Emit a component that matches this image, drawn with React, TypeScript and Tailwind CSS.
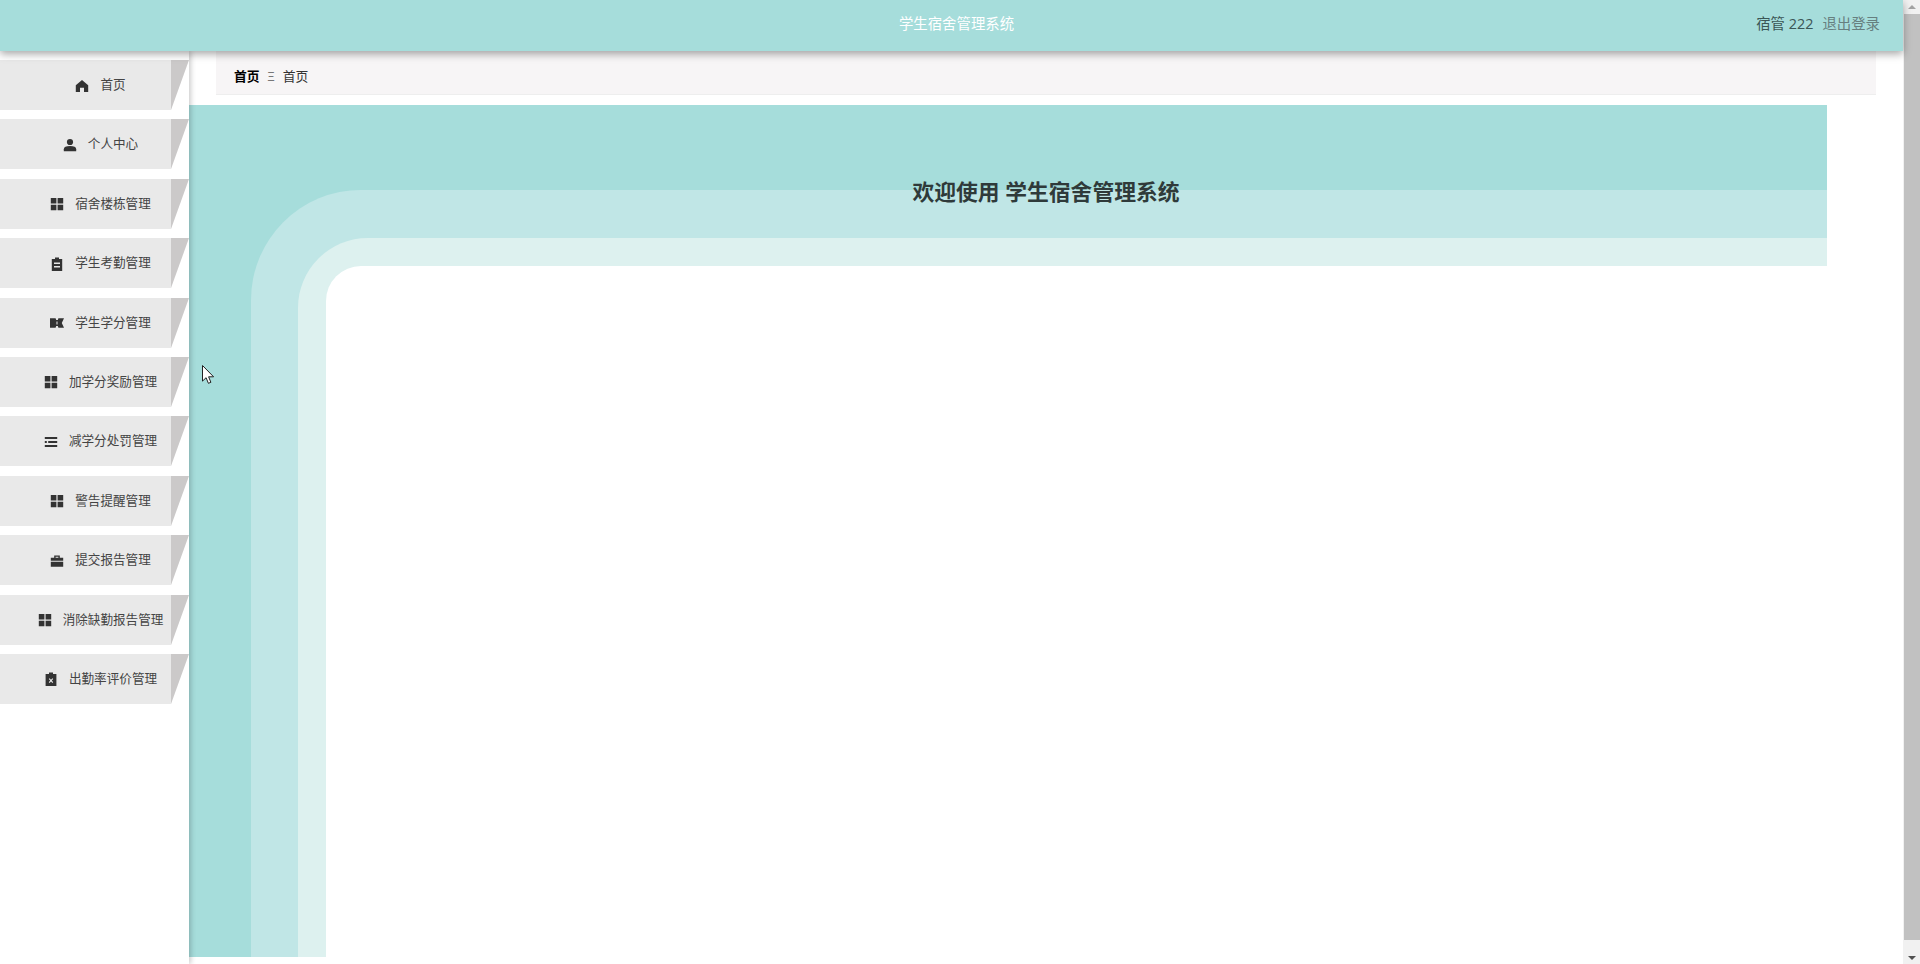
import type { ReactNode } from "react";

const Svg = ({ children }: { children: ReactNode }) => (
  <svg viewBox="0 0 14 14" className="w-[14px] h-[14px] shrink-0 text-[#333]" fill="currentColor">
    {children}
  </svg>
);

const HomeIcon = () => (
  <Svg>
    <path d="M7 1 13.2 6.2V13H9V8.8H5V13H.8V6.2Z" />
  </Svg>
);
const UserIcon = () => (
  <Svg>
    <circle cx="7" cy="4" r="3.1" />
    <path d="M.8 13.2v-2C.8 9 3 8 7 8s6.2 1 6.2 3.2v2Z" />
  </Svg>
);
const GridIcon = () => (
  <Svg>
    <path d="M.8 1h5.6v5.5H.8ZM7.6 1h5.6v5.5H7.6ZM.8 7.7h5.6v5.5H.8ZM7.6 7.7h5.6v5.5H7.6Z" />
  </Svg>
);
const ClipboardIcon = () => (
  <Svg>
    <path
      fillRule="evenodd"
      d="M5 .6h4V2h3.2v12H1.8V2H5ZM4 5.4v1.5h6V5.4ZM4 9v1.5h6V9Z"
    />
  </Svg>
);
const TicketIcon = () => (
  <Svg>
    <path
      fillRule="evenodd"
      d="M0 2.2h5.6L6.2 4h1.6l.6-1.8H14L11.8 7 14 11.8H8.4L7.8 10H6.2l-.6 1.8H0ZM6.5 5.4v3.2h1V5.4Z"
    />
  </Svg>
);
const ListIcon = () => (
  <Svg>
    <path d="M.8 2h12.4v1.9H.8ZM.8 6h2v1.9h-2ZM4.2 6h9v1.9h-9ZM.8 10h12.4v1.9H.8Z" />
  </Svg>
);
const CaseIcon = () => (
  <Svg>
    <path
      fillRule="evenodd"
      d="M4.2 3.8V1.4h5.6v2.4h3.4v3H.8v-3ZM5.6 2.7v1.1h2.8V2.7ZM.8 7.8h12.4v5H.8Z"
    />
  </Svg>
);
const ClipboardXIcon = () => (
  <Svg>
    <path
      fillRule="evenodd"
      d="M5 .4h4V2h3.4v12H1.6V2H5ZM5.6 6.2 4.8 7 6.2 8.6 4.8 10.2l.8.8L7 9.4 8.4 11l.8-.8-1.4-1.6L9.2 7l-.8-.8L7 7.8Z"
    />
  </Svg>
);

const menu = [
  { label: "首页", icon: <HomeIcon /> },
  { label: "个人中心", icon: <UserIcon /> },
  { label: "宿舍楼栋管理", icon: <GridIcon /> },
  { label: "学生考勤管理", icon: <ClipboardIcon /> },
  { label: "学生学分管理", icon: <TicketIcon /> },
  { label: "加学分奖励管理", icon: <GridIcon /> },
  { label: "减学分处罚管理", icon: <ListIcon /> },
  { label: "警告提醒管理", icon: <GridIcon /> },
  { label: "提交报告管理", icon: <CaseIcon /> },
  { label: "消除缺勤报告管理", icon: <GridIcon /> },
  { label: "出勤率评价管理", icon: <ClipboardXIcon /> },
];

export default function App() {
  return (
    <div className="relative flex h-screen w-full overflow-hidden bg-white font-['Open_Sans','Noto_Sans_CJK_SC',sans-serif]">
      <div className="flex min-w-0 flex-1 flex-col">
        {/* Top bar */}
        <header className="relative z-20 grid h-[51px] shrink-0 grid-cols-[1fr_auto_1fr] items-center bg-[#a6dddb] pb-[3px] pl-[10px] shadow-[0_3px_8px_rgba(0,0,0,0.35)]">
          <div />
          <div className="text-[14.4px] text-white">学生宿舍管理系统</div>
          <div className="flex items-center justify-end gap-[9px] pr-[23px] text-[14.4px]">
            <span className="text-[#3b5656]">宿管 222</span>
            <span className="text-[#667f7f]">退出登录</span>
          </div>
        </header>

        <div className="flex min-h-0 flex-1">
          {/* Sidebar */}
          <aside className="relative z-10 flex w-[189px] shrink-0 flex-col gap-[9.4px] bg-white pt-[9px] shadow-[2px_0_5px_rgba(0,0,0,0.2)]">
            {menu.map((item) => (
              <div key={item.label} className="flex h-[50px] shrink-0">
                <div className="flex w-[171px] items-center justify-center gap-[11px] bg-[#e9e9e9] pl-[30px] pt-[1px]">
                  {item.icon}
                  <span className="whitespace-nowrap text-[12.6px] text-[#444]">{item.label}</span>
                </div>
                <div className="h-0 w-0 border-t-[50px] border-r-[18px] border-t-[#cbc9c9] border-r-transparent" />
              </div>
            ))}
          </aside>

          {/* Main */}
          <main className="flex min-w-0 flex-1 flex-col pb-[7px]">
            <div className="mx-[27px] flex h-[44px] shrink-0 items-center gap-[8px] border-b border-[#eeeeee] bg-[#f7f5f6] pl-[18px] pt-[8px] text-[12.8px]">
              <span className="font-bold text-black">首页</span>
              <span className="text-[#777]">Ξ</span>
              <span className="text-[#333]">首页</span>
            </div>
            <div className="relative mt-[10px] flex min-h-0 flex-1 flex-col">
              <div className="mr-[76px] flex flex-1 flex-col bg-[#a6dddb] pl-[62px] pt-[85px]">
                <div className="flex flex-1 flex-col rounded-tl-[110px] bg-[#c0e6e6] pl-[47px] pt-[48px]">
                  <div className="flex flex-1 flex-col rounded-tl-[70px] bg-[#ddf1ef] pl-[28px] pt-[28px]">
                    <div className="flex-1 rounded-tl-[35px] bg-white" />
                  </div>
                </div>
              </div>
              <h1 className="absolute inset-x-0 top-[72px] text-center text-[21.8px] leading-[30px] font-bold text-[#2f3a3a]">
                欢迎使用 学生宿舍管理系统
              </h1>
            </div>
          </main>
        </div>
      </div>

      {/* Scrollbar */}
      <div className="flex h-screen w-[17px] shrink-0 flex-col bg-[#f1f1f1]">
        <div className="flex h-[14px] w-[17px] shrink-0 items-center justify-center">
          <div className="h-0 w-0 border-x-[4px] border-b-[4px] border-x-transparent border-b-[#a3a3a3]" />
        </div>
        <div className="ml-[1px] h-[926px] w-[16px] shrink-0 bg-[#c1c1c1]" />
        <div className="flex w-[17px] flex-1 items-end justify-center pb-[4px]">
          <div className="h-0 w-0 border-x-[4px] border-t-[4px] border-x-transparent border-t-[#505050]" />
        </div>
      </div>

      {/* Mouse pointer captured in the screenshot */}
      <svg viewBox="0 0 12 19" className="absolute left-[202px] top-[365px] z-30 h-[19px] w-[12px]">
        <path
          d="M.5.5v15.6l3.6-3.4 2.3 5.6 2.5-1-2.3-5.5h5Z"
          fill="#fff"
          stroke="#222"
          strokeWidth="1"
          strokeLinejoin="round"
        />
      </svg>
    </div>
  );
}
